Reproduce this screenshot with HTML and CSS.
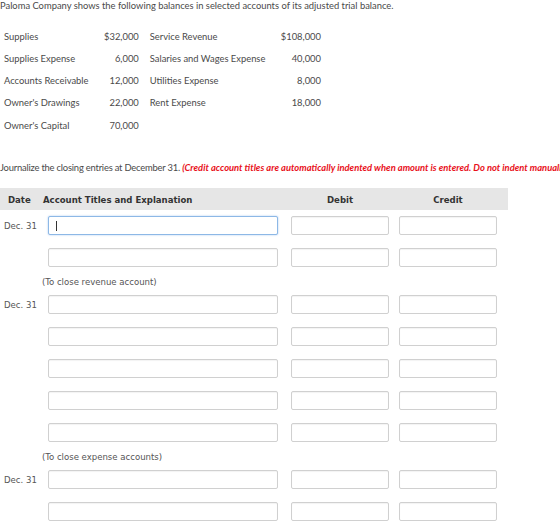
FILE: index.html
```html
<!DOCTYPE html>
<html>
<head>
<meta charset="utf-8">
<link rel="stylesheet" href="styles.css">
</head>
<body>
<p class="intro">Paloma Company shows the following balances in selected accounts of its adjusted trial balance.</p>
<table class="balances">
  <tr><td class="n1">Supplies</td><td class="a1">$32,000</td><td class="n2">Service Revenue</td><td class="a2">$108,000</td></tr>
  <tr><td class="n1">Supplies Expense</td><td class="a1">6,000</td><td class="n2">Salaries and Wages Expense</td><td class="a2">40,000</td></tr>
  <tr><td class="n1">Accounts Receivable</td><td class="a1">12,000</td><td class="n2">Utilities Expense</td><td class="a2">8,000</td></tr>
  <tr><td class="n1">Owner's Drawings</td><td class="a1">22,000</td><td class="n2">Rent Expense</td><td class="a2">18,000</td></tr>
  <tr><td class="n1">Owner's Capital</td><td class="a1">70,000</td><td class="n2"></td><td class="a2"></td></tr>
</table>
<p class="instr">Journalize the closing entries at December 31. <span class="warn">(Credit account titles are automatically indented when amount is entered. Do not indent manually.)</span></p>
<div class="journal">
  <div class="head">
    <div class="h-date">Date</div>
    <div class="h-acct">Account Titles and Explanation</div>
    <div class="h-debit">Debit</div>
    <div class="h-credit">Credit</div>
  </div>
  <div class="row">
    <div class="date">Dec. 31</div>
    <div class="acct focus"><span class="caret"></span></div>
    <div class="amt"></div>
    <div class="amt"></div>
  </div>
  <div class="row">
    <div class="date"></div>
    <div class="acct"></div>
    <div class="amt"></div>
    <div class="amt"></div>
  </div>
  <div class="note">(To close revenue account)</div>
  <div class="row">
    <div class="date">Dec. 31</div>
    <div class="acct"></div>
    <div class="amt"></div>
    <div class="amt"></div>
  </div>
  <div class="row">
    <div class="date"></div>
    <div class="acct"></div>
    <div class="amt"></div>
    <div class="amt"></div>
  </div>
  <div class="row">
    <div class="date"></div>
    <div class="acct"></div>
    <div class="amt"></div>
    <div class="amt"></div>
  </div>
  <div class="row">
    <div class="date"></div>
    <div class="acct"></div>
    <div class="amt"></div>
    <div class="amt"></div>
  </div>
  <div class="row">
    <div class="date"></div>
    <div class="acct"></div>
    <div class="amt"></div>
    <div class="amt"></div>
  </div>
  <div class="note">(To close expense accounts)</div>
  <div class="row">
    <div class="date">Dec. 31</div>
    <div class="acct"></div>
    <div class="amt"></div>
    <div class="amt"></div>
  </div>
  <div class="row">
    <div class="date"></div>
    <div class="acct"></div>
    <div class="amt"></div>
    <div class="amt"></div>
  </div>
</div>
</body>
</html>
```
FILE: styles.css
```css
html, body {
  margin: 0;
  padding: 0;
  background: #fff;
  overflow: hidden;
}
body {
  font-family: Lato, "Liberation Sans", sans-serif;
  color: #4a4a4a;
}
.intro {
  margin: 0;
  font-size: 9.4px;
  line-height: 11px;
  white-space: nowrap;
}
.balances {
  border-collapse: collapse;
  margin-top: 14px;
  margin-left: 4px;
  font-size: 9.4px;
}
.balances td {
  padding: 0;
  height: 22.25px;
  white-space: nowrap;
}
.balances .n1 { width: 100px; }
.balances .a1 { width: 34px; text-align: right; }
.balances .n2 { width: 131px; padding-left: 11px; }
.balances .a2 { width: 33px; text-align: right; }
.instr {
  margin: 26px 0 0 0;
  font-size: 9.4px;
  line-height: 12px;
  white-space: nowrap;
  letter-spacing: -0.2px;
}
.warn {
  color: #e8101a;
  font-style: italic;
  font-weight: bold;
  letter-spacing: 0;
}
.journal {
  margin-top: 14px;
  font-family: "DejaVu Sans Condensed", "DejaVu Sans", sans-serif;
  font-size: 9.5px;
  color: #555;
}
.head {
  display: flex;
  align-items: center;
  width: 508px;
  height: 22px;
  background: #e6e6e6;
  color: #333;
  font-weight: bold;
}
.h-date { width: 43px; padding-left: 8px; box-sizing: border-box; }
.h-acct { width: 248px; }
.h-debit { width: 98px; text-align: center; }
.h-credit { width: 98px; margin-left: 10px; text-align: center; }
.row {
  display: flex;
  align-items: center;
  height: 19px;
  margin-top: 13px;
}
.head + .row { margin-top: 6px; }
.note + .row { margin-top: 0; }
.date {
  width: 48px;
  padding-left: 4px;
  box-sizing: border-box;
}
.acct, .amt {
  height: 19px;
  box-sizing: border-box;
  border: 1px solid #d0d0d0;
  border-radius: 2px;
  box-shadow: inset 0 1px 1px rgba(0,0,0,0.05);
  background: #fff;
}
.acct { width: 230px; position: relative; }
.amt { width: 98px; margin-left: 13px; }
.amt + .amt { margin-left: 10px; }
.acct.focus {
  border-color: #8db8e6;
  box-shadow: 0 0 2px rgba(102,158,230,0.6);
}
.caret {
  position: absolute;
  left: 7px;
  top: 4px;
  width: 1px;
  height: 10px;
  background: #333;
}
.note {
  height: 28px;
  padding-top: 9px;
  box-sizing: border-box;
  padding-left: 42px;
  line-height: 12px;
}
```
